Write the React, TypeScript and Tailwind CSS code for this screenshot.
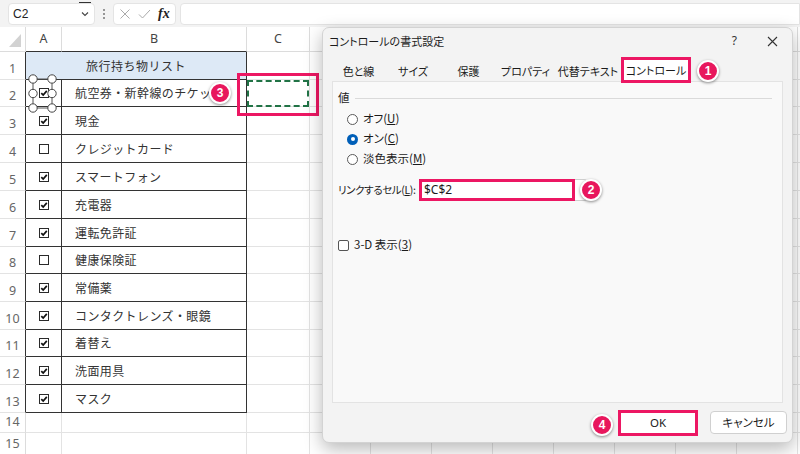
import React from "react";

const items: { label: string; checked: boolean; h: string }[] = [
  { label: "航空券・新幹線のチケット", checked: true, h: "h-[27px]" },
  { label: "現金", checked: true, h: "h-[28px]" },
  { label: "クレジットカード", checked: false, h: "h-[28px]" },
  { label: "スマートフォン", checked: true, h: "h-[28px]" },
  { label: "充電器", checked: true, h: "h-[28px]" },
  { label: "運転免許証", checked: true, h: "h-[28px]" },
  { label: "健康保険証", checked: false, h: "h-[27px]" },
  { label: "常備薬", checked: true, h: "h-[28px]" },
  { label: "コンタクトレンズ・眼鏡", checked: true, h: "h-[28px]" },
  { label: "着替え", checked: true, h: "h-[27px]" },
  { label: "洗面用具", checked: true, h: "h-[28px]" },
  { label: "マスク", checked: true, h: "h-[28px]" },
];

const extraCols = [0, 1, 2, 3, 4, 5, 6, 7, 8];

function CellCheck({ checked }: { checked: boolean }) {
  return (
    <div className="flex h-[10px] w-[10px] items-center justify-center border border-[#2a2a2a] bg-white">
      {checked && (
        <svg width="8" height="8" viewBox="0 0 8 8">
          <path d="M1.3 4.1 L3.2 6.1 L6.8 1.9" stroke="#111" strokeWidth="1.7" fill="none" />
        </svg>
      )}
    </div>
  );
}

function RowNum({ n, dark }: { n: number; dark: boolean }) {
  return (
    <div
      className={`flex w-[26px] shrink-0 items-end justify-center border-b border-b-[#e3e3e3] border-r pb-[3px] font-['Noto_Sans',sans-serif] text-[12.5px] leading-[14px] text-[#666] ${
        dark ? "border-r-[#333]" : "border-r-[#dcdcdc]"
      }`}
    >
      {n}
    </div>
  );
}

function Rest() {
  return (
    <>
      <div className="w-[63px] shrink-0 border-b border-r border-[#e3e3e3]" />
      {extraCols.map((c) => (
        <div key={c} className="w-[61px] shrink-0 border-b border-r border-[#e3e3e3]" />
      ))}
    </>
  );
}

function Badge({ n, className }: { n: number; className: string }) {
  return (
    <div
      className={`absolute flex h-[22px] w-[22px] items-center justify-center rounded-full border-2 border-white bg-[#e8175d] font-['Liberation_Sans',sans-serif] text-[12px] font-bold leading-none text-white shadow-[0_1px_3px_rgba(0,0,0,0.45)] ${className}`}
    >
      {n}
    </div>
  );
}

function Radio({ on }: { on: boolean }) {
  return on ? (
    <div className="flex h-[11px] w-[11px] items-center justify-center rounded-full bg-[#005fb8]">
      <div className="h-[4px] w-[4px] rounded-full bg-white" />
    </div>
  ) : (
    <div className="h-[11px] w-[11px] rounded-full border border-[#5a5a5a] bg-white" />
  );
}

export default function App() {
  return (
    <div className="relative h-[454px] w-[800px] overflow-hidden bg-white font-['Noto_Sans_CJK_JP',sans-serif] text-[#333]">
      {/* formula toolbar */}
      <div className="flex h-[27px] items-center bg-[#f3f3f3] pl-[8px]">
        <div className="relative flex h-[22px] w-[87px] items-center justify-between rounded-[4px] border border-[#e4e4e4] bg-white pl-[4px] pr-[4px]">
          <span className="font-['Liberation_Sans',sans-serif] text-[12px] text-[#222]">C2</span>
          <svg width="10" height="10" viewBox="0 0 10 10">
            <path d="M2 3.5 L5 6.5 L8 3.5" stroke="#444" strokeWidth="1.1" fill="none" />
          </svg>
          <div className="absolute right-[3px] top-[-2px] h-[1.5px] w-[12px] bg-[#333]" />
        </div>
        <div className="flex w-[18px] flex-col items-center gap-[2px]">
          <div className="h-[2px] w-[2px] rounded-full bg-[#777]" />
          <div className="h-[2px] w-[2px] rounded-full bg-[#777]" />
          <div className="h-[2px] w-[2px] rounded-full bg-[#777]" />
        </div>
        <div className="flex h-[22px] w-[63px] items-center gap-[7px] rounded-[4px] border border-[#e4e4e4] bg-white pl-[5px]">
          <svg width="12" height="12" viewBox="0 0 12 12">
            <path d="M1.5 1.5 L10.5 10.5 M10.5 1.5 L1.5 10.5" stroke="#aaa" strokeWidth="1" fill="none" />
          </svg>
          <svg width="13" height="12" viewBox="0 0 13 12">
            <path d="M1 6.5 L4.5 10 L12 2" stroke="#aaa" strokeWidth="1" fill="none" />
          </svg>
          <span className="font-['Liberation_Serif',serif] text-[14px] font-bold italic leading-none text-[#222]">fx</span>
        </div>
        <div className="ml-[4px] h-[22px] flex-1 rounded-l-[4px] border border-[#e4e4e4] bg-white" />
      </div>

      {/* column headers */}
      <div className="flex h-[25px] font-['Noto_Sans',sans-serif] text-[12.5px] text-[#444]">
        <div className="flex w-[26px] shrink-0 items-end justify-end border-b border-r border-[#dcdcdc] pb-[4px] pr-[4px]">
          <svg width="12" height="13" viewBox="0 0 12 13">
            <path d="M12 0 L12 13 L0 13 Z" fill="#d2d2d2" />
          </svg>
        </div>
        <div className="flex w-[36px] shrink-0 items-center justify-center border-b border-r border-b-[#333] border-r-[#dcdcdc]">A</div>
        <div className="flex w-[185px] shrink-0 items-center justify-center border-b border-r border-b-[#333] border-r-[#dcdcdc]">B</div>
        <div className="flex w-[63px] shrink-0 items-center justify-center border-b border-r border-[#dcdcdc]">C</div>
        {extraCols.map((c) => (
          <div key={c} className="w-[61px] shrink-0 border-b border-r border-[#dcdcdc]" />
        ))}
      </div>

      {/* row 1 */}
      <div className="flex h-[28px]">
        <RowNum n={1} dark />
        <div className="flex w-[221px] shrink-0 items-center justify-center border-b border-r border-[#333] bg-[#dde9f6] text-[12px] tracking-[0.5px] text-[#333]">
          旅行持ち物リスト
        </div>
        <Rest />
      </div>

      {/* rows 2-13 */}
      {items.map((it, i) => (
        <div key={i} className={`flex ${it.h}`}>
          <RowNum n={i + 2} dark />
          <div className="flex w-[36px] shrink-0 items-center justify-center border-b border-r border-[#333] pl-[1px]">
            <CellCheck checked={it.checked} />
          </div>
          <div className="flex w-[185px] shrink-0 items-center overflow-hidden whitespace-nowrap border-b border-r border-[#333] pl-[13px] text-[12px] tracking-[0.4px] text-[#333]">
            {it.label}
          </div>
          <Rest />
        </div>
      ))}

      {/* rows 14-15 */}
      {[14, 15].map((n) => (
        <div key={n} className={`flex ${n === 14 ? "h-[20px]" : "h-[22px]"}`}>
          <RowNum n={n} dark={false} />
          <div className="w-[36px] shrink-0 border-b border-r border-[#e3e3e3]" />
          <div className="w-[185px] shrink-0 border-b border-r border-[#e3e3e3]" />
          <Rest />
        </div>
      ))}

      {/* selection handles on checkbox in row 2 */}
      <svg className="absolute left-[27px] top-[73px]" width="32" height="42" viewBox="0 0 32 42">
        <rect x="6" y="6" width="19" height="29" fill="none" stroke="#555" strokeWidth="1" />
        {[
          [6, 6],
          [25, 6],
          [6, 20.5],
          [25, 20.5],
          [6, 35],
          [25, 35],
        ].map(([cx, cy], k) => (
          <circle key={k} cx={cx} cy={cy} r="4.2" fill="white" stroke="#444" strokeWidth="1" />
        ))}
      </svg>

      {/* C2 marquee and highlight */}
      <div className="absolute left-[247px] top-[80px] h-[27px] w-[62px] border-2 border-dashed border-[#217346]" />
      <div className="absolute left-[237px] top-[73px] h-[43px] w-[82px] border-[3px] border-[#ec1763]" />
      <Badge n={3} className="left-[209px] top-[82px]" />

      {/* dialog */}
      <div className="absolute left-[322px] top-[27px] flex h-[416px] w-[471px] flex-col rounded-[7px] border border-[#d3d3d3] bg-[#f3f3f3] text-[11.5px] text-[#1b1b1b] shadow-[0_6px_18px_rgba(0,0,0,0.28)] [font-feature-settings:'palt']">
        <div className="flex h-[26px] items-center pl-[6px] pr-[14px]">
          <span className="text-[11px]">コントロールの書式設定</span>
          <span className="ml-auto font-['Noto_Sans',sans-serif] text-[12px] text-[#333]">?</span>
          <svg className="ml-[30px]" width="11" height="11" viewBox="0 0 11 11">
            <path d="M1 1 L10 10 M10 1 L1 10" stroke="#333" strokeWidth="1.1" fill="none" />
          </svg>
        </div>
        <div className="relative z-10 -mb-[2px] flex h-[29px] items-end pl-[9px] text-[11px]">
          {[
            ["色と線", "w-[53px]"],
            ["サイズ", "w-[56px]"],
            ["保護", "w-[55px]"],
            ["プロパティ", "w-[59px]"],
            ["代替テキスト", "w-[66px]"],
          ].map(([t, w]) => (
            <div key={t} className={`flex h-[26px] items-center justify-center whitespace-nowrap pt-[3px] ${w}`}>
              {t}
            </div>
          ))}
          <div className="flex h-[26px] w-[70px] items-center justify-center whitespace-nowrap border-[3px] border-[#ec1763] bg-white pt-[1px]">
            コントロール
          </div>
        </div>
        <div className="mx-[9px] flex h-[322px] flex-col border border-[#e3e3e3] bg-[#f9f9f9] px-[5px]">
          <div className="mt-[8px] flex h-[16px] items-center">
            <span>値</span>
            <div className="ml-[5px] mr-[5px] h-px flex-1 bg-[#dadada]" />
          </div>
          <div className="mt-[3px] flex flex-col pl-[9px]">
            <div className="flex h-[20px] items-center gap-[5px]">
              <Radio on={false} />
              <span>
                オフ(<span className="underline">U</span>)
              </span>
            </div>
            <div className="flex h-[20px] items-center gap-[5px]">
              <Radio on />
              <span>
                オン(<span className="underline">C</span>)
              </span>
            </div>
            <div className="flex h-[20px] items-center gap-[5px]">
              <Radio on={false} />
              <span>
                淡色表示(<span className="underline">M</span>)
              </span>
            </div>
          </div>
          <div className="mt-[10px] flex h-[22px] items-center">
            <span className="w-[81px] shrink-0 whitespace-nowrap text-[10.5px] tracking-[-0.4px]">
              リンクするセル(<span className="underline">L</span>):
            </span>
            <div className="flex h-[22px] w-[156px] shrink-0 items-center border-[3px] border-[#ec1763] bg-white pl-[2px] font-['Noto_Sans',sans-serif] text-[12px]">
              $C$2
            </div>
            <div className="h-[22px] w-[12px] rounded-r-[3px] border border-l-0 border-[#cfcfcf] bg-white" />
          </div>
          <div className="mt-[37px] flex h-[14px] items-center gap-[5px]">
            <div className="h-[11px] w-[11px] rounded-[2px] border border-[#555] bg-white" />
            <span>
              3-D 表示(<span className="underline">3</span>)
            </span>
          </div>
        </div>
        <div className="flex flex-1 items-center justify-end gap-[12px] pr-[5px]">
          <div className="flex h-[26px] w-[80px] items-center justify-center border-[3px] border-[#ec1763] bg-white font-['Noto_Sans',sans-serif] text-[11.5px]">
            OK
          </div>
          <div className="flex h-[23px] w-[77px] items-center justify-center rounded-[4px] border border-[#d0d0d0] bg-white">
            キャンセル
          </div>
        </div>
      </div>

      <Badge n={1} className="left-[697px] top-[60px]" />
      <Badge n={2} className="left-[580px] top-[179px]" />
      <Badge n={4} className="left-[591px] top-[414px]" />
    </div>
  );
}
